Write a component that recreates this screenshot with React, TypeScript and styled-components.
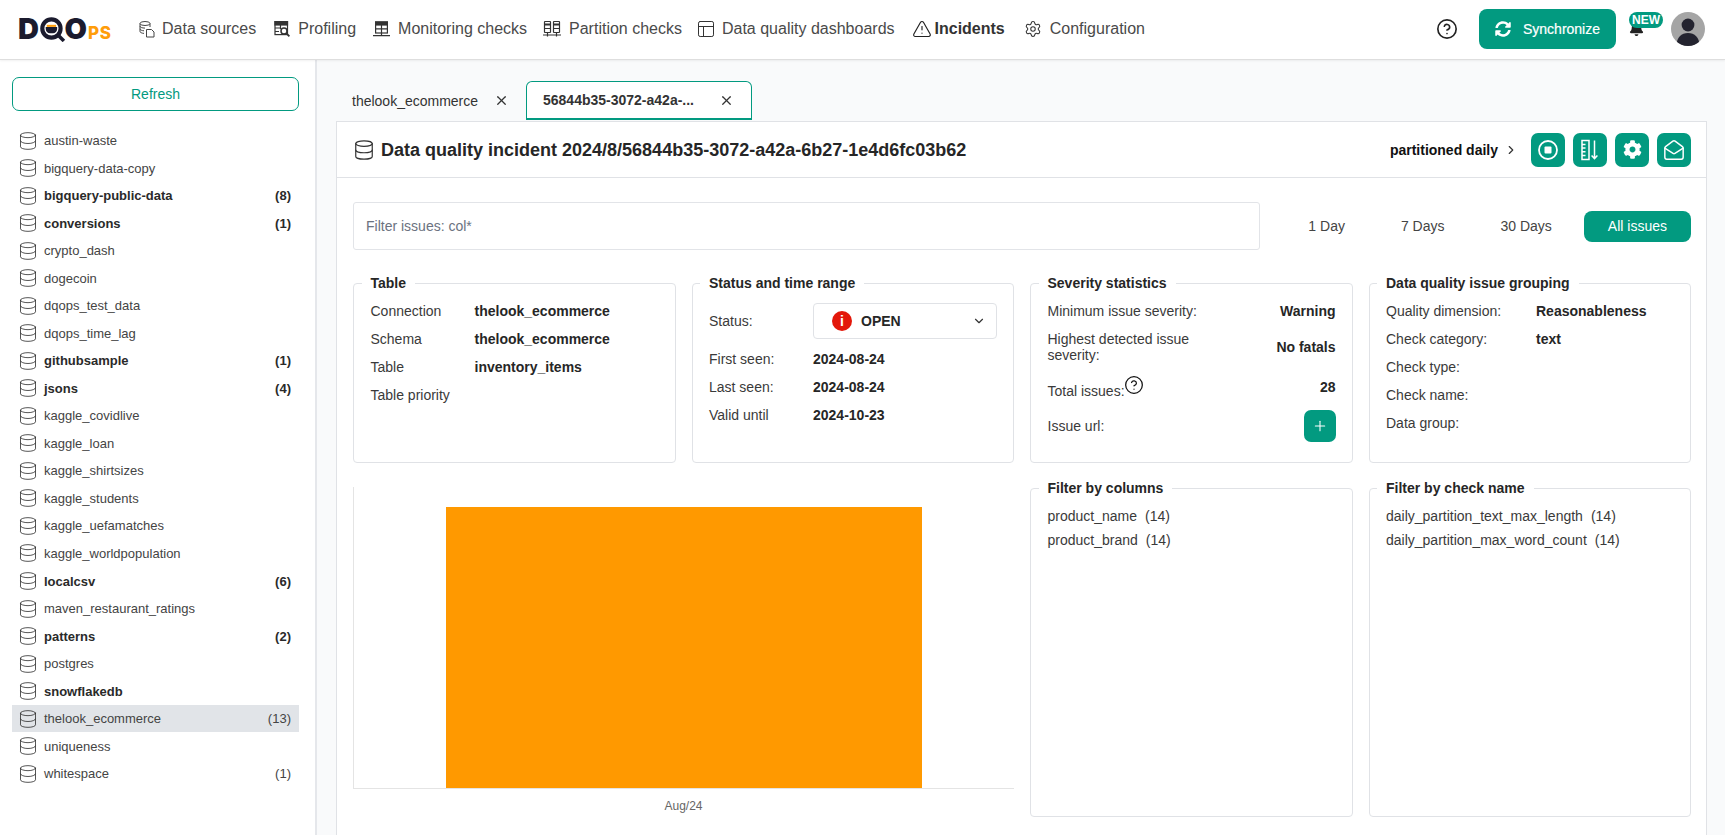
import React from "react";
import styled, { createGlobalStyle } from "styled-components";
import {
  CircleHelp,
  ChevronDown,
  ChevronRight,
  Database,
  Layout,
  MailOpen,
  Plus,
  Settings,
  TriangleAlert,
  X,
} from "lucide-react";
import { FaBell, FaCog, FaSyncAlt } from "react-icons/fa";

const TEAL = "#029a80";

const Global = createGlobalStyle`
  html, body { margin: 0; padding: 0; height: 100%; overflow: hidden; }
  body { font-family: "Liberation Sans", Arial, sans-serif; color: #222; background: #fff; }
  * { box-sizing: border-box; }
`;

const Page = styled.div`
  height: 100vh;
  display: flex;
  flex-direction: column;
  overflow: hidden;
`;

const TopBar = styled.header`
  height: 60px;
  flex: none;
  display: flex;
  align-items: center;
  background: #fff;
  border-bottom: 1px solid #dedede;
  box-shadow: 0 1px 2px rgba(0, 0, 0, 0.06);
  padding: 0 20px 1px 18px;
  position: relative;
  z-index: 2;
`;

const Logo = styled.div`
  width: 93px;
  height: 22px;
  flex: none;
  display: flex;
  align-items: flex-end;
  color: #1b1b2e;
  font-family: Inter, "Liberation Sans", sans-serif;
  font-weight: 900;
  line-height: 22px;
`;

const LogoLetter = styled.span<{ $mr: number; $size: number }>`
  font-size: ${(p) => p.$size}px;
  margin-right: ${(p) => p.$mr}px;
`;

const LogoOrange = styled.span`
  color: #ff9d0a;
  font-size: 17px;
  font-weight: 800;
  line-height: 14px;
  letter-spacing: 0.6px;
  text-transform: uppercase;
`;

const QMark = styled.svg`
  flex: none;
  margin-right: -1.5px;
  margin-bottom: -2px;
`;

const Nav = styled.nav`
  display: flex;
  align-items: center;
  gap: 17px;
  margin-left: 28px;
`;

const NavItem = styled.a<{ $gap: number; $active?: boolean; $lead?: number }>`
  display: flex;
  align-items: center;
  gap: ${(p) => p.$gap}px;
  margin-left: ${(p) => p.$lead ?? 0}px;
  font-size: 16px;
  line-height: 20px;
  color: ${(p) => (p.$active ? "#333" : "#4a4a4a")};
  font-weight: ${(p) => (p.$active ? 700 : 400)};
  white-space: nowrap;
`;

const TopRight = styled.div`
  margin-left: auto;
  display: flex;
  align-items: center;
`;

const HelpBtn = styled.span`
  display: flex;
  color: #222;
  margin-right: 21px;
`;

const SyncBtn = styled.button`
  width: 137px;
  height: 40px;
  background: ${TEAL};
  color: #fff;
  border: 0;
  border-radius: 8px;
  display: flex;
  align-items: center;
  justify-content: center;
  gap: 12px;
  font: 14px "Liberation Sans", Arial, sans-serif;
  -webkit-text-stroke: 0.2px #fff;
`;

const BellWrap = styled.div`
  width: 34px;
  height: 34px;
  margin-left: 13px;
  position: relative;
  color: #222;
`;

const BellIcon = styled.span`
  position: absolute;
  left: 0;
  top: 9px;
  display: flex;
`;

const NewBadge = styled.span`
  position: absolute;
  left: 0;
  top: 0;
  width: 34px;
  height: 16px;
  background: ${TEAL};
  color: #fff;
  border-radius: 9px;
  font-size: 12px;
  font-weight: 700;
  line-height: 16px;
  text-align: center;
`;

const Avatar = styled.div`
  width: 34px;
  height: 34px;
  border-radius: 50%;
  margin-left: 8px;
  overflow: hidden;
  background: #a5a5a5;
  display: flex;
`;

const Body = styled.div`
  flex: 1;
  display: flex;
  min-height: 0;
`;

const Sidebar = styled.aside`
  width: 317px;
  flex: none;
  background: #fff;
  border-right: 2px solid #e5e7eb;
  padding: 17px 16px 0 12px;
`;

const RefreshBtn = styled.button`
  width: 287px;
  height: 34px;
  display: block;
  background: #fff;
  border: 1px solid ${TEAL};
  border-radius: 7px;
  color: ${TEAL};
  font: 14px "Liberation Sans", Arial, sans-serif;
`;

const SourceList = styled.ul`
  list-style: none;
  margin: 16px 0 0;
  padding: 0;
  width: 287px;
`;

const SourceRow = styled.li<{ $bold?: boolean; $selected?: boolean }>`
  height: 27.53px;
  display: flex;
  align-items: center;
  padding: 0 8px 0 5.5px;
  font-size: 13px;
  font-weight: ${(p) => (p.$bold ? 700 : 400)};
  color: ${(p) => (p.$bold ? "#2a2a2a" : "#444")};
  background: ${(p) => (p.$selected ? "#e1e4e8" : "transparent")};
`;

const SourceName = styled.span`
  margin-left: 6.5px;
  flex: 1;
`;

const Main = styled.main`
  flex: 1;
  min-width: 0;
  background: #f9fafb;
  padding: 21px 18px 0 19px;
  display: flex;
  flex-direction: column;
`;

const Tabs = styled.div`
  height: 40px;
  flex: none;
  display: flex;
  gap: 2px;
`;

const Tab = styled.div<{ $active?: boolean }>`
  width: ${(p) => (p.$active ? 226 : 188)}px;
  height: 39px;
  display: flex;
  align-items: center;
  justify-content: space-between;
  padding: ${(p) => (p.$active ? "0 17px 0 16px" : "0 15px 0 16px")};
  font-size: 14px;
  font-weight: ${(p) => (p.$active ? 700 : 400)};
  color: #333;
  background: ${(p) => (p.$active ? "#fff" : "transparent")};
  border: ${(p) => (p.$active ? `1px solid ${TEAL}` : "0")};
  border-bottom-width: ${(p) => (p.$active ? "2px" : "0")};
  border-radius: 6px 6px 0 0;
`;

const Card = styled.section`
  flex: 1;
  min-height: 0;
  background: #fff;
  border: 1px solid #e0e2e6;
  border-bottom: 0;
  display: flex;
  flex-direction: column;
`;

const CardHead = styled.div`
  height: 56px;
  flex: none;
  display: flex;
  align-items: center;
  padding: 0 15px 0 16px;
  border-bottom: 1px solid #e0e2e6;
`;

const CardTitle = styled.h1`
  margin: 2px 0 0 6px;
  font-size: 18px;
  font-weight: 700;
  color: #262626;
`;

const Crumb = styled.div`
  margin-left: auto;
  display: flex;
  align-items: center;
  gap: 6px;
  font-size: 14px;
  font-weight: 700;
  color: #111;
`;

const ActionGroup = styled.div`
  display: flex;
  gap: 8px;
  margin-left: 13px;
`;

const IconBtn = styled.button`
  width: 34px;
  height: 34px;
  padding: 0;
  border: 0;
  border-radius: 7px;
  background: ${TEAL};
  color: #fff;
  display: flex;
  align-items: center;
  justify-content: center;
`;

const CardBody = styled.div`
  padding: 24px 15px 0 16px;
`;

const FilterRow = styled.div`
  display: flex;
  align-items: center;
  height: 48px;
`;

const FilterInput = styled.input`
  flex: none;
  width: 907px;
  height: 48px;
  padding: 0 12px;
  border: 1px solid #e2e4e8;
  border-radius: 3px;
  font: 14px "Liberation Sans", Arial, sans-serif;
  color: #333;
  background: #fff;
  &::placeholder { color: #6b7280; opacity: 1; }
`;

const Periods = styled.div`
  margin-left: auto;
  display: flex;
  gap: 8px;
`;

const PeriodBtn = styled.button<{ $active?: boolean }>`
  height: 31px;
  padding: 0 24px;
  border: 0;
  border-radius: 8px;
  background: ${(p) => (p.$active ? TEAL : "transparent")};
  color: ${(p) => (p.$active ? "#fff" : "#444")};
  font: 14px "Liberation Sans", Arial, sans-serif;
`;

const InfoGrid = styled.div`
  display: grid;
  grid-template-columns: repeat(4, 322.5px);
  grid-template-rows: 188px 337px;
  column-gap: 16px;
  row-gap: 17px;
  margin-top: 25px;
`;

const Panel = styled.fieldset<{ $top?: number }>`
  margin: 0;
  min-width: 0;
  padding: ${(p) => p.$top ?? 6}px 16px 0 16.5px;
  border: 1px solid #e0e2e6;
  border-radius: 4px;
`;

const PanelTitle = styled.legend`
  padding: 0 9px;
  margin-left: -9px;
  font-size: 14px;
  line-height: 16px;
  font-weight: 700;
  color: #262626;
`;

const InfoRow = styled.div<{ $h?: number }>`
  display: flex;
  align-items: center;
  justify-content: space-between;
  min-height: ${(p) => p.$h ?? 28}px;
  font-size: 14px;
  line-height: 16px;
  color: #3a3a3a;
`;

const Label = styled.span<{ $w: number }>`
  flex: none;
  width: ${(p) => p.$w}px;
`;

const Value = styled.span`
  flex: 1;
  font-weight: 700;
  color: #262626;
`;

const RightValue = styled.span`
  font-weight: 700;
  color: #262626;
`;

const Select = styled.div`
  flex: none;
  width: 184px;
  height: 36px;
  margin-right: auto;
  border: 1px solid #e0e2e6;
  border-radius: 4px;
  display: flex;
  align-items: center;
  padding: 0 10px 0 18px;
  font-weight: 700;
  color: #262626;
  gap: 9px;
`;

const StatusDot = styled.span`
  width: 20px;
  height: 20px;
  border-radius: 50%;
  background: #e3170a;
  color: #fff;
  font-size: 14px;
  font-weight: 700;
  line-height: 20px;
  text-align: center;
`;

const SelectChevron = styled.span`
  margin-left: auto;
  display: flex;
  color: #333;
`;

const TotalLabel = styled.span`
  display: flex;
  align-items: flex-end;
  gap: 0;
  & > svg { margin-bottom: 4px; margin-left: -1px; color: #111; }
`;

const AddBtn = styled.button`
  width: 32px;
  height: 32px;
  padding: 0;
  border: 0;
  border-radius: 7px;
  background: ${TEAL};
  color: #fff;
  display: flex;
  align-items: center;
  justify-content: center;
`;

const ChartCell = styled.div`
  grid-column: span 2;
  padding-top: 7px;
`;

const Plot = styled.div`
  height: 302px;
  display: flex;
  padding: 20px 92px 0 92px;
  border-left: 1px solid #e4e4e4;
  border-bottom: 1px solid #e4e4e4;
`;

const Bar = styled.div`
  flex: 1;
  background: #ff9900;
`;

const AxisLabel = styled.div`
  text-align: center;
  font-size: 12px;
  line-height: 14px;
  margin-top: 10px;
  color: #666;
`;

const FilterItem = styled.div`
  height: 24px;
  display: flex;
  align-items: center;
  gap: 8px;
  font-size: 14px;
  color: #3a3a3a;
`;

const DataSourcesIcon = () => (
  <svg width="16" height="18" viewBox="0 0 16 18" fill="none" stroke="#444" strokeWidth="1">
    <ellipse cx="6" cy="3.5" rx="5" ry="2" />
    <path d="M1 3.5v8c0 .9 1.6 1.7 4 1.9M11 3.5V7M1 6.2c0 1 2 1.9 5 1.9M1 8.9c0 1 2 1.8 4 1.9" />
    <path d="M7.5 9.5h5l2.5 2.5v5H7.5z" />
  </svg>
);

const ProfilingIcon = () => (
  <svg width="17" height="18" viewBox="0 0 17 18" fill="none" stroke="#333" strokeWidth="1.2">
    <rect x="1" y="1.6" width="12.5" height="13" />
    <rect x="1" y="1.6" width="12.5" height="3.4" fill="#333" />
    <path d="M1 8h5M1 11.5h4M6.5 5v4" />
    <circle cx="10" cy="11" r="3" fill="#fff" strokeWidth="1.5" />
    <path d="M12.2 13.2l3.2 3.2" strokeWidth="1.8" />
  </svg>
);

const MonitoringIcon = () => (
  <svg width="17" height="18" viewBox="0 0 17 18" fill="none" stroke="#333" strokeWidth="1.2">
    <rect x="2.6" y="2" width="11.8" height="11" />
    <rect x="2.6" y="2" width="11.8" height="3" fill="#333" />
    <path d="M2.6 8.8h11.8M8.5 5v10M0 15.6h17" />
  </svg>
);

const PartitionIcon = () => (
  <svg width="18" height="18" viewBox="0 0 18 18" fill="none" stroke="#333" strokeWidth="1.2">
    <rect x="1.5" y="1.5" width="6" height="11" rx=".5" />
    <rect x="10.5" y="1.5" width="6" height="11" rx=".5" />
    <path d="M1.5 4.5h6M10.5 4.5h6" strokeWidth="2.2" />
    <path d="M1.5 8.5h6M10.5 8.5h6M4.5 12.5v4M13.5 12.5v4M0 15h18" />
  </svg>
);

const RulerSortIcon = () => (
  <svg width="22" height="24" viewBox="0 0 22 24" fill="none" stroke="#fff" strokeWidth="1.5">
    <rect x="3" y="2.5" width="7" height="19" />
    <path d="M3 6.5h3.5M3 10h3.5M3 13.8h3.5M3 17.5h3.5" />
    <path d="M15.5 2.5v18M12.6 17.6l2.9 3 2.9-3" />
  </svg>
);

const StopCircleIcon = () => (
  <svg width="22" height="22" viewBox="0 0 22 22" fill="none">
    <circle cx="11" cy="11" r="9" stroke="#fff" strokeWidth="1.8" />
    <rect x="7.5" y="7.5" width="7" height="7" rx="1" fill="#fff" />
  </svg>
);

const MagnifierQ = () => (
  <QMark width="26" height="25" viewBox="0 0 25 24">
    <circle cx="11" cy="11" r="8.8" fill="#fff" stroke="#1b1b2e" strokeWidth="4" />
    <path d="M5.5 9.5h11v2a4 4 0 0 1-4 4h-3a4 4 0 0 1-4-4z" fill="#1b1b2e" />
    <path d="M6.5 7.5h9v2h-9z" fill="#ff9d0a" />
    <path d="M17 17l6 6" stroke="#1b1b2e" strokeWidth="3.4" />
  </QMark>
);

const AvatarArt = () => (
  <svg width="34" height="34" viewBox="0 0 34 34">
    <circle cx="17" cy="13" r="6.4" fill="#23232f" />
    <path d="M5.5 34c0-9 5-13 11.5-13s11.5 4 11.5 13z" fill="#23232f" />
  </svg>
);

const navItems = [
  { label: "Data sources", icon: <DataSourcesIcon />, gap: 7 },
  { label: "Profiling", icon: <ProfilingIcon />, gap: 7, lead: 1 },
  { label: "Monitoring checks", icon: <MonitoringIcon />, gap: 8 },
  { label: "Partition checks", icon: <PartitionIcon />, gap: 8, lead: -1 },
  { label: "Data quality dashboards", icon: <Layout size={20} strokeWidth={1.2} color="#333" />, gap: 6, lead: -3 },
  { label: "Incidents", icon: <TriangleAlert size={20} strokeWidth={1.4} color="#222" />, gap: 3, active: true, lead: 0 },
  { label: "Configuration", icon: <Settings size={18} strokeWidth={1.4} color="#333" />, gap: 8, lead: 2 },
];

const sources: { name: string; count?: number; bold?: boolean; selected?: boolean }[] = [
  { name: "austin-waste" },
  { name: "bigquery-data-copy" },
  { name: "bigquery-public-data", count: 8, bold: true },
  { name: "conversions", count: 1, bold: true },
  { name: "crypto_dash" },
  { name: "dogecoin" },
  { name: "dqops_test_data" },
  { name: "dqops_time_lag" },
  { name: "githubsample", count: 1, bold: true },
  { name: "jsons", count: 4, bold: true },
  { name: "kaggle_covidlive" },
  { name: "kaggle_loan" },
  { name: "kaggle_shirtsizes" },
  { name: "kaggle_students" },
  { name: "kaggle_uefamatches" },
  { name: "kaggle_worldpopulation" },
  { name: "localcsv", count: 6, bold: true },
  { name: "maven_restaurant_ratings" },
  { name: "patterns", count: 2, bold: true },
  { name: "postgres" },
  { name: "snowflakedb", bold: true },
  { name: "thelook_ecommerce", count: 13, selected: true },
  { name: "uniqueness" },
  { name: "whitespace", count: 1 },
];

export default function App() {
  return (
    <Page>
      <Global />
      <TopBar>
        <Logo>
          <LogoLetter $mr={1} $size={29}>D</LogoLetter>
          <MagnifierQ />
          <LogoLetter $mr={1} $size={29}>O</LogoLetter>
          <LogoOrange>ps</LogoOrange>
        </Logo>
        <Nav>
          {navItems.map((n) => (
            <NavItem key={n.label} $gap={n.gap} $active={n.active} $lead={n.lead}>
              {n.icon}
              {n.label}
            </NavItem>
          ))}
        </Nav>
        <TopRight>
          <HelpBtn>
            <CircleHelp size={22} strokeWidth={1.8} />
          </HelpBtn>
          <SyncBtn>
            <FaSyncAlt size={16} />
            Synchronize
          </SyncBtn>
          <BellWrap>
            <BellIcon>
              <FaBell size={15} />
            </BellIcon>
            <NewBadge>NEW</NewBadge>
          </BellWrap>
          <Avatar>
            <AvatarArt />
          </Avatar>
        </TopRight>
      </TopBar>
      <Body>
        <Sidebar>
          <RefreshBtn>Refresh</RefreshBtn>
          <SourceList>
            {sources.map((s) => (
              <SourceRow key={s.name} $bold={s.bold} $selected={s.selected}>
                <Database size={20} strokeWidth={1} color="#333" />
                <SourceName>{s.name}</SourceName>
                {s.count !== undefined && <span>({s.count})</span>}
              </SourceRow>
            ))}
          </SourceList>
        </Sidebar>
        <Main>
          <Tabs>
            <Tab>
              thelook_ecommerce
              <X size={15} strokeWidth={2} color="#333" />
            </Tab>
            <Tab $active>
              56844b35-3072-a42a-...
              <X size={15} strokeWidth={2} color="#333" />
            </Tab>
          </Tabs>
          <Card>
            <CardHead>
              <Database size={22} strokeWidth={1.3} color="#333" />
              <CardTitle>Data quality incident 2024/8/56844b35-3072-a42a-6b27-1e4d6fc03b62</CardTitle>
              <Crumb>
                partitioned daily
                <ChevronRight size={14} strokeWidth={2} color="#333" />
              </Crumb>
              <ActionGroup>
                <IconBtn>
                  <StopCircleIcon />
                </IconBtn>
                <IconBtn>
                  <RulerSortIcon />
                </IconBtn>
                <IconBtn>
                  <FaCog size={19} />
                </IconBtn>
                <IconBtn>
                  <MailOpen size={22} strokeWidth={1.6} />
                </IconBtn>
              </ActionGroup>
            </CardHead>
            <CardBody>
              <FilterRow>
                <FilterInput placeholder="Filter issues: col*" />
                <Periods>
                  <PeriodBtn>1 Day</PeriodBtn>
                  <PeriodBtn>7 Days</PeriodBtn>
                  <PeriodBtn>30 Days</PeriodBtn>
                  <PeriodBtn $active>All issues</PeriodBtn>
                </Periods>
              </FilterRow>
              <InfoGrid>
                <Panel>
                  <PanelTitle>Table</PanelTitle>
                  <InfoRow>
                    <Label $w={104}>Connection</Label>
                    <Value>thelook_ecommerce</Value>
                  </InfoRow>
                  <InfoRow>
                    <Label $w={104}>Schema</Label>
                    <Value>thelook_ecommerce</Value>
                  </InfoRow>
                  <InfoRow>
                    <Label $w={104}>Table</Label>
                    <Value>inventory_items</Value>
                  </InfoRow>
                  <InfoRow>
                    <Label $w={104}>Table priority</Label>
                    <Value />
                  </InfoRow>
                </Panel>
                <Panel>
                  <PanelTitle>Status and time range</PanelTitle>
                  <InfoRow $h={48}>
                    <Label $w={104}>Status:</Label>
                    <Select>
                      <StatusDot>i</StatusDot>
                      OPEN
                      <SelectChevron>
                        <ChevronDown size={14} strokeWidth={2} />
                      </SelectChevron>
                    </Select>
                  </InfoRow>
                  <InfoRow>
                    <Label $w={104}>First seen:</Label>
                    <Value>2024-08-24</Value>
                  </InfoRow>
                  <InfoRow>
                    <Label $w={104}>Last seen:</Label>
                    <Value>2024-08-24</Value>
                  </InfoRow>
                  <InfoRow>
                    <Label $w={104}>Valid until</Label>
                    <Value>2024-10-23</Value>
                  </InfoRow>
                </Panel>
                <Panel>
                  <PanelTitle>Severity statistics</PanelTitle>
                  <InfoRow>
                    <Label $w={170}>Minimum issue severity:</Label>
                    <RightValue>Warning</RightValue>
                  </InfoRow>
                  <InfoRow $h={44}>
                    <Label $w={170}>Highest detected issue severity:</Label>
                    <RightValue>No fatals</RightValue>
                  </InfoRow>
                  <InfoRow $h={36}>
                    <TotalLabel>
                      Total issues:
                      <CircleHelp size={20} strokeWidth={1.5} />
                    </TotalLabel>
                    <RightValue>28</RightValue>
                  </InfoRow>
                  <InfoRow $h={42}>
                    <span>Issue url:</span>
                    <AddBtn>
                      <Plus size={16} strokeWidth={1.6} />
                    </AddBtn>
                  </InfoRow>
                </Panel>
                <Panel>
                  <PanelTitle>Data quality issue grouping</PanelTitle>
                  <InfoRow>
                    <Label $w={150}>Quality dimension:</Label>
                    <Value>Reasonableness</Value>
                  </InfoRow>
                  <InfoRow>
                    <Label $w={150}>Check category:</Label>
                    <Value>text</Value>
                  </InfoRow>
                  <InfoRow>
                    <Label $w={150}>Check type:</Label>
                    <Value />
                  </InfoRow>
                  <InfoRow>
                    <Label $w={150}>Check name:</Label>
                    <Value />
                  </InfoRow>
                  <InfoRow>
                    <Label $w={150}>Data group:</Label>
                    <Value />
                  </InfoRow>
                </Panel>
                <ChartCell>
                  <Plot>
                    <Bar />
                  </Plot>
                  <AxisLabel>Aug/24</AxisLabel>
                </ChartCell>
                <Panel $top={8}>
                  <PanelTitle>Filter by columns</PanelTitle>
                  <FilterItem>
                    <span>product_name</span>
                    <span>(14)</span>
                  </FilterItem>
                  <FilterItem>
                    <span>product_brand</span>
                    <span>(14)</span>
                  </FilterItem>
                </Panel>
                <Panel $top={8}>
                  <PanelTitle>Filter by check name</PanelTitle>
                  <FilterItem>
                    <span>daily_partition_text_max_length</span>
                    <span>(14)</span>
                  </FilterItem>
                  <FilterItem>
                    <span>daily_partition_max_word_count</span>
                    <span>(14)</span>
                  </FilterItem>
                </Panel>
              </InfoGrid>
            </CardBody>
          </Card>
        </Main>
      </Body>
    </Page>
  );
}
